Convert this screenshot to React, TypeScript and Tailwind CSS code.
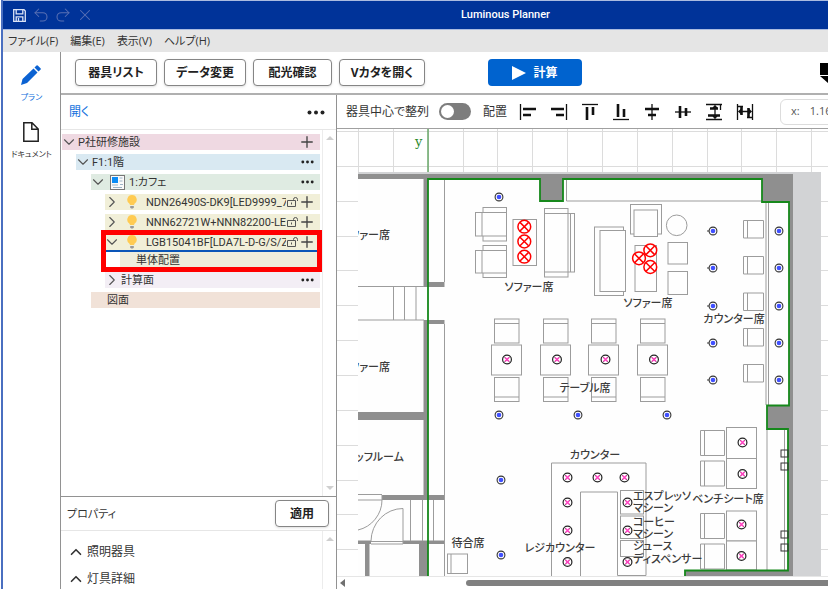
import type { ReactNode } from "react";
import clsx from "clsx";
import { ChevronDown, ChevronRight, ChevronUp, Plus, Redo2, Undo2, X } from "lucide-react";

const menus = ["ファイル(F)", "編集(E)", "表示(V)", "ヘルプ(H)"];

const toolbarButtons = [
  { label: "器具リスト", width: "w-[82px]" },
  { label: "データ変更", width: "w-[82px]" },
  { label: "配光確認", width: "w-[79px]" },
  { label: "Vカタを開く", width: "w-[86px]" },
];

export default function App() {
  return (
    <div className="h-screen overflow-hidden bg-white pb-[3px] pl-px pr-[7px] font-['Open_Sans','Noto_Sans_CJK_JP',sans-serif] text-[#333] [font-feature-settings:'palt']">
      <div className="flex h-full flex-col overflow-hidden border-l-2 border-[#4a6fc0]">
        <TitleBar />
        <MenuBar />
        <div className="flex min-h-0 flex-1">
          <SideNav />
          <div className="flex min-w-0 flex-1 flex-col border-l border-[#929292]">
            <MainToolbar />
            <div className="flex min-h-0 flex-1">
              <div className="flex w-[276px] shrink-0 flex-col border-r border-[#929292]">
                <TreePanel />
                <PropertyPanel />
              </div>
              <CanvasPanel />
            </div>
          </div>
        </div>
      </div>
    </div>
  );
}

function TitleBar() {
  return (
    <header className="relative flex h-[30px] shrink-0 items-center gap-1 border-y border-[#aabbe0] bg-[#003399] px-[10px] text-[#5870b4]">
      <button aria-label="保存" className="mr-[2px] text-[#dbe3f5]">
        <SaveIcon />
      </button>
      <button aria-label="元に戻す">
        <Undo2 size={18} strokeWidth={1.4} />
      </button>
      <button aria-label="やり直し">
        <Redo2 size={18} strokeWidth={1.4} />
      </button>
      <button aria-label="閉じる">
        <X size={18} strokeWidth={1.4} />
      </button>
      <h1 className="absolute inset-x-0 pl-[180px] text-center font-['Roboto',sans-serif] text-[11px] font-medium text-white">
        Luminous Planner
      </h1>
    </header>
  );
}

function MenuBar() {
  return (
    <nav className="flex h-[22px] shrink-0 items-center gap-3 bg-[#e5e5e5] px-[5px] text-[11px] leading-4">
      {menus.map((menu) => (
        <button key={menu}>{menu}</button>
      ))}
    </nav>
  );
}

function SideNav() {
  return (
    <nav className="flex w-[57px] shrink-0 flex-col items-center pt-[13px] text-[8px] leading-3">
      <button className="flex flex-col items-center gap-[6px] text-[#1170dc]">
        <PencilIcon />
        プラン
      </button>
      <button className="mt-[19px] flex flex-col items-center gap-[6px]">
        <DocumentIcon />
        ドキュメント
      </button>
    </nav>
  );
}

function MainToolbar() {
  return (
    <div className="flex h-[43px] shrink-0 items-center gap-[7px] overflow-hidden border-b-2 border-[#b0b0b0] pl-[14px]">
      {toolbarButtons.map(({ label, width }) => (
        <button
          key={label}
          className={clsx(
            "h-[27px] shrink-0 rounded-[4px] border border-[#858585] bg-white text-[12px] font-bold leading-4 text-[#222] shadow-sm",
            width
          )}
        >
          {label}
        </button>
      ))}
      <button className="ml-[56px] flex h-[27px] w-[94px] shrink-0 items-center justify-center gap-[7px] rounded-[4px] bg-[#0063cf] text-[12px] font-bold leading-4 text-white">
        <svg width="14" height="14" viewBox="0 0 14 14" fill="currentColor">
          <path d="M0 0 14 7 0 14Z" />
        </svg>
        計算
      </button>
      <svg className="ml-auto shrink-0" width="8" height="20" viewBox="0 0 8 20">
        <path d="M0 0h8v12H0zM0 13h8v7z" fill="#000" />
      </svg>
    </div>
  );
}

interface TreeRowProps {
  label: string;
  color: string;
  indent: string;
  toggle?: "open" | "closed";
  icon?: ReactNode;
  action?: "add" | "more";
  lock?: boolean;
}

function TreeRow({ label, color, indent, toggle, icon, action, lock }: TreeRowProps) {
  return (
    <div
      className={clsx(
        "flex h-4 items-center pr-[6px] font-['Roboto','Noto_Sans_CJK_JP',sans-serif] text-[11px] leading-4",
        color,
        indent
      )}
    >
      {toggle && (
        <button aria-label="展開" className="mr-[2px] flex w-[14px] shrink-0 justify-center text-[#555]">
          {toggle === "open" ? (
            <ChevronDown className="shrink-0" size={18} strokeWidth={1.5} />
          ) : (
            <ChevronRight className="shrink-0" size={18} strokeWidth={1.5} />
          )}
        </button>
      )}
      {icon}
      <span className="min-w-0 flex-1 overflow-hidden whitespace-nowrap pt-[2px]">{label}</span>
      {lock && <UnlockIcon />}
      {action === "add" && (
        <button aria-label="追加" className="flex w-[14px] shrink-0 justify-center text-[#444]">
          <Plus className="shrink-0" size={18} strokeWidth={1.8} />
        </button>
      )}
      {action === "more" && (
        <button aria-label="メニュー" className="shrink-0">
          <Dots small />
        </button>
      )}
    </div>
  );
}

function TreePanel() {
  return (
    <section className="flex min-h-0 flex-1 flex-col">
      <div className="flex h-[35px] shrink-0 items-center justify-between border-b border-[#e6e6e6] pl-2 pr-[11px]">
        <button className="text-[12px] leading-4 text-[#1170dc]">開く</button>
        <button aria-label="メニュー">
          <Dots />
        </button>
      </div>
      <div className="flex min-h-0 flex-1">
        <div className="flex min-w-0 flex-1 flex-col gap-1 pl-px pr-[2px] pt-1">
          <TreeRow label="P社研修施設" color="bg-[#efd9e2]" indent="" toggle="open" action="add" />
          <TreeRow label="F1:1階" color="bg-[#d9e9f2]" indent="ml-[14px]" toggle="open" action="more" />
          <TreeRow
            label="1:カフェ"
            color="bg-[#dfebe2]"
            indent="ml-[29px]"
            toggle="open"
            icon={<RoomIcon />}
            action="more"
          />
          <TreeRow
            label="NDN26490S-DK9[LED9999_70"
            color="bg-[#f1efd8]"
            indent="ml-[43px]"
            toggle="closed"
            icon={<BulbIcon />}
            lock
            action="add"
          />
          <TreeRow
            label="NNN62721W+NNN82200-LE"
            color="bg-[#f1efd8]"
            indent="ml-[43px]"
            toggle="closed"
            icon={<BulbIcon />}
            lock
            action="add"
          />
          <div className="relative">
            <TreeRow
              label="LGB15041BF[LDA7L-D-G/S/Z6"
              color="bg-[#f1efd8]"
              indent="ml-[43px]"
              toggle="open"
              icon={<BulbIcon />}
              lock
              action="add"
            />
            <div className="ml-[43px] h-[2px] bg-[#0a55b8]" />
            <TreeRow label="単体配置" color="bg-[#eeeddc]" indent="ml-[58px] pl-4" />
            <div className="pointer-events-none absolute -inset-y-1 -right-[2px] left-[39px] border-[5px] border-[#ff0000]" />
          </div>
          <TreeRow label="計算面" color="bg-[#f3eef5]" indent="ml-[43px]" toggle="closed" action="more" />
          <TreeRow label="図面" color="bg-[#f1e2d8]" indent="ml-[29px] pl-4" />
        </div>
        <div className="flex w-[14px] shrink-0 flex-col items-center justify-between border-l border-[#ececec] py-[6px]">
          <ScrollArrow />
          <ScrollArrow down />
        </div>
      </div>
    </section>
  );
}

function PropertyPanel() {
  return (
    <section className="h-[93px] shrink-0 border-t border-[#929292]">
      <div className="flex h-[34px] items-center justify-between border-b border-[#e6e6e6] pl-[6px] pr-[7px]">
        <h2 className="text-[11px] leading-4">プロパティ</h2>
        <button className="h-[27px] w-[54px] rounded-[4px] border border-[#858585] text-[12px] font-bold leading-4 text-[#222] shadow-sm">
          適用
        </button>
      </div>
      <div className="flex h-[58px]">
        <div className="flex flex-1 flex-col gap-[9px] pl-[6px] pt-3 text-[12px] leading-4">
          {["照明器具", "灯具詳細"].map((name) => (
            <button key={name} className="flex items-center gap-[2px]">
              <ChevronUp size={18} strokeWidth={2.2} />
              {name}
            </button>
          ))}
        </div>
        <div className="flex w-[14px] flex-col items-center border-l border-[#ececec] pt-[6px]">
          <ScrollArrow />
        </div>
      </div>
    </section>
  );
}

// Icons of the alignment tools, all on a 18x18 grid
const alignTools = [
  { name: "左揃え", thin: "M1.5 1v16", bold: "M4 6h13M4 12h8" },
  { name: "右揃え", thin: "M16.5 1v16", bold: "M1 6h13M6 12h8" },
  { name: "上揃え", thin: "M1 1.5h16", bold: "M6 4v13M12 4v8" },
  { name: "下揃え", thin: "M1 16.5h16", bold: "M6 1v13M12 6v8" },
  { name: "左右中央揃え", thin: "M9 1v16", bold: "M2 6h14M5 12h8" },
  { name: "上下中央揃え", thin: "M1 9h16", bold: "M6 3v12M12 5v8" },
  {
    name: "上下等間隔",
    thin: "M1 1.5h16M1 16.500h16M10 3v12M8 5l2-2 2 2M8 13l2 2 2-2M15.500 2v5",
    bold: "M5 5.500h8M3 12.500h12",
  },
  {
    name: "左右等間隔",
    thin: "M1.5 1v16M16.500 1v16M3 8.500h12M5 6.500 3 8.500l2 2M13 6.500l2 2-2 2M2 3.500h5M11 14.500h5",
    bold: "M5.500 4v8M12.500 5v10",
  },
];

function CanvasPanel() {
  return (
    <main className="flex min-w-0 flex-1 flex-col overflow-hidden">
      <div className="flex h-[34px] shrink-0 items-center border-b border-[#a0a0a0] pl-[9px]">
        <label className="flex shrink-0 items-center gap-[10px] whitespace-nowrap text-[12px] leading-4">
          器具中心で整列
          <input
            type="checkbox"
            className="h-[17px] w-8 appearance-none rounded-full bg-[#7d7d7d] p-[2px] before:block before:size-[13px] before:rounded-full before:bg-white"
          />
        </label>
        <span className="ml-3 shrink-0 text-[12px] leading-4">配置</span>
        <div className="ml-3 flex shrink-0 gap-[13px]">
          {alignTools.map((tool) => (
            <button key={tool.name} aria-label={tool.name}>
              <svg width="18" height="18" viewBox="0 0 18 18" fill="none" stroke="#111">
                <path d={tool.thin} strokeWidth="1.3" />
                <path d={tool.bold} strokeWidth="2.6" />
              </svg>
            </button>
          ))}
        </div>
        <label className="ml-[26px] flex h-[26px] w-[120px] shrink-0 items-center gap-[10px] rounded-[6px] border border-[#dcdcdc] pl-[10px] text-[11px] text-[#555]">
          x:
          <input className="w-16 outline-none" defaultValue="1.161" />
        </label>
      </div>
      <div className="min-h-0 flex-1 overflow-hidden">
        <FloorPlan />
      </div>
      <div className="flex h-[13px] shrink-0 items-center border-t border-[#e6e6e6] pl-[3px]">
        <svg width="5" height="8" viewBox="0 0 5 8">
          <path d="M5 0v8L0 4Z" fill="#707070" />
        </svg>
        <div className="ml-[121px] h-[6px] flex-1 rounded-l-full bg-[#808080]" />
      </div>
    </main>
  );
}

const blueLamps = [
  [499, 197], [499, 415], [578, 415], [667, 415], [501, 480], [501, 555],
  [713, 231], [713, 268], [713, 306], [713, 343], [713, 380],
  [779, 231], [779, 268], [779, 306], [779, 343], [779, 380],
];

const pinkLamps = [
  [507, 359.5], [557, 359.5], [605.5, 359.5], [654, 359.5],
  [567.5, 477.5], [597.5, 477.5], [624.5, 477.5],
  [567.5, 502.5], [567.5, 530.5], [567.5, 562],
  [627.5, 502.5], [627.5, 530.5], [627.5, 562],
  [742.5, 442.5], [742.5, 474], [741.5, 524.5], [741.5, 556],
];

const selectedLamps = [
  [524.3, 226.7], [524.3, 241.5], [524.3, 256.7],
  [650.3, 250.3], [639, 258.3], [650.3, 267],
];

// x, y, width, height
const furniture = [
  [483, 207.5, 23.5, 33.5], [475.5, 212.5, 31, 23.5],
  [483, 245.5, 23.5, 32], [475.5, 250.5, 31, 22.5],
  [513, 219.5, 23.5, 46],
  [544.5, 213.5, 30, 58.5], [544.5, 208.5, 23.5, 68.5],
  [594.5, 227, 29, 68.5], [600, 230.5, 25.5, 61],
  [630.5, 204.5, 31, 29.5], [634, 210, 23.5, 26.5],
  [635, 245.5, 21.5, 46], [668, 242.5, 19.5, 21.5], [668, 271.5, 19.5, 23],
  [447.5, 554, 20, 19.5],
  [726.5, 427.5, 30, 31], [726.5, 458.5, 30, 30], [726.5, 511, 30, 30], [726.5, 541, 30, 29],
  [620.5, 490.5, 23, 23.5], [620.5, 516, 23, 22.5], [620.5, 540.5, 23, 16],
];

const counterSeats = [220.5, 256.5, 293, 328.5, 364.5];
const benchSeats = [430.5, 461, 513.5, 544];
const tables = [491.5, 540.5, 588.5, 637.5];
const outlets = [450, 463, 531, 544];

const labels = [
  { x: 529, y: 291, text: "ソファー席" },
  { x: 648, y: 307, text: "ソファー席" },
  { x: 734, y: 323, text: "カウンター席" },
  { x: 585, y: 392, text: "テーブル席" },
  { x: 595, y: 459, text: "カウンター" },
  { x: 560, y: 552, text: "レジカウンター" },
  { x: 468, y: 547, text: "待合席" },
  { x: 728, y: 503, text: "ベンチシート席" },
];

// labels that run out of the left edge of the drawing
const edgeLabels = [
  { x: 390, y: 239, text: "ファー席" },
  { x: 390, y: 371, text: "ファー席" },
  { x: 404, y: 461, text: "ッフルーム" },
];

const machineLabels = [
  { y: 500, text: "エスプレッソ" },
  { y: 512, text: "マシーン" },
  { y: 526, text: "コーヒー" },
  { y: 538, text: "マシーン" },
  { y: 550, text: "ジュース" },
  { y: 563, text: "ディスペンサー" },
];

function FloorPlan() {
  return (
    <svg width="491" height="447" viewBox="337 129 491 447">
      <clipPath id="plan-area">
        <rect x="358" y="172" width="463" height="404" />
      </clipPath>
      <g stroke="#dcdcdc">
        {Array.from({ length: 14 }, (_, i) => (
          <path key={i} d={`M${358.5 + Math.round(i * 34.85)} 129V576`} />
        ))}
        {Array.from({ length: 13 }, (_, i) => (
          <path key={i} d={`M337 ${131.5 + Math.round(i * 34.85)}H828`} />
        ))}
      </g>
      <path d="M428 129V172" stroke="#5fa35f" strokeWidth="1.4" />
      <text x="415" y="146" fill="#2d8a2d" className="font-['DejaVu_Serif',serif] text-[13px]">
        y
      </text>

      <rect x="358" y="172" width="463" height="404" fill="#fefefe" />
      <path d="M358 172H821V576H792V175H358Z" fill="#d2d3d5" />

      {/* walls */}
      <g fill="#8f8f8f">
        <path d="M358 174H793V576H685V570H788V429H767V405H789V202H762V179H563V201H540V179H358Z" />
        <path d="M423.5 178H428V287H423.5ZM428 282H444.500V287H428ZM423.5 320H444.500V324H428V495H444.500V500H382V495H423.5V420H358V412H423.5Z" />
        <path d="M358 540.500H371V544H369.500V576H365V544H358ZM403 540.500H444.500V544H428V576H419V544H403Z" />
      </g>

      <g fill="none" stroke="#9c9c9c">
        <path d="M444.500 179V282M444.500 324V576M358 286.500H424M358 320H424M393.500 287V320M404.500 287V320M416 287V320" />
        <path d="M358 494.500H382M358 500H382V495M410.500 500V541M422.500 500V541M433.500 500V541M371 541.500H403M371 544H403" />
        <path d="M382 500A31 31 0 0 1 358 530M371 541A32 33 0 0 1 403 508.500V544" />
        <path d="M566.500 179V201H762M766 202V405M768.500 202V405M767 429V570M784.500 429V570" />
        <path d="M551.500 576V463H646V575.500H617.500V492H580.500V576" />
      </g>

      <g fill="#fefefe" stroke="#9c9c9c">
        {furniture.map(([x, y, w, h]) => (
          <rect key={`${x}-${y}`} x={x} y={y} width={w} height={h} />
        ))}
        <circle cx="676.7" cy="225.3" r="10.3" />
        <path d="M482 212V236M482 250V273M483 212.500H506M483 250.500H506M544 213.500H568M544 272H568M570.500 213V272M451 554V573" />
        {tables.map((x) => (
          <g key={x}>
            <rect x={x} y="345" width="30" height="30" />
            <rect x={x + 3} y="319" width="24.500" height="24" />
            <rect x={x + 3} y="377.500" width="24.500" height="24" />
            <path d={`M${x + 3} 323.500h24.500M${x + 3} 397h24.500`} />
          </g>
        ))}
        {counterSeats.map((y) => (
          <path key={y} d={`M743.500 ${y}h20v17.500h-20zM747.500 ${y}v17.500`} />
        ))}
        {benchSeats.map((y) => (
          <path key={y} d={`M700.500 ${y}h24v25h-24zM704.500 ${y}v25`} />
        ))}
      </g>

      {/* room outline */}
      <path
        d="M428 576V179H540V201H563V179H762V202H789V405.500H767V429H788V570.500H685V576"
        fill="none"
        stroke="#16881b"
        strokeWidth="1.8"
      />
      {outlets.map((y) => (
        <rect key={y} x="781" y={y} width="7" height="7" fill="none" stroke="#333" />
      ))}

      <g fill="#3c3c3c" className="text-[11px] font-medium" textAnchor="middle">
        {labels.map((label) => (
          <text key={`${label.x}-${label.y}`} x={label.x} y={label.y}>
            {label.text}
          </text>
        ))}
      </g>
      <g fill="#3c3c3c" className="text-[11px] font-medium" textAnchor="end" clipPath="url(#plan-area)">
        {edgeLabels.map((label) => (
          <text key={`${label.x}-${label.y}`} x={label.x} y={label.y}>
            {label.text}
          </text>
        ))}
      </g>
      <g fill="#3c3c3c" className="text-[11px] font-medium">
        {machineLabels.map((label) => (
          <text key={label.y} x="633" y={label.y}>
            {label.text}
          </text>
        ))}
      </g>

      {blueLamps.map(([x, y]) => (
        <g key={`${x}-${y}`}>
          {x === 713 && <circle cx={x - 5} cy={y} r="0.8" fill="#222" />}
          <circle cx={x} cy={y} r="3.9" fill="#fff" stroke="#333" strokeWidth="1.1" />
          <circle cx={x} cy={y} r="2.3" fill="#4050ff" />
        </g>
      ))}
      {pinkLamps.map(([x, y]) => (
        <g key={`${x}-${y}`}>
          <circle cx={x} cy={y} r="4.4" fill="#fff" stroke="#222" strokeWidth="1.2" />
          <path d={`M${x - 3} ${y - 3}l6 6m0-6l-6 6`} stroke="#444" strokeWidth="0.8" />
          <path d={`M${x - 2} ${y - 2}l4 4m0-4l-4 4`} stroke="#ff3fc0" strokeWidth="1.5" />
        </g>
      ))}
      {selectedLamps.map(([x, y]) => (
        <g key={`${x}-${y}`} stroke="#ff0000" strokeWidth="1.5">
          <circle cx={x} cy={y} r="6.400" fill="#fff" />
          <path d={`M${x - 4.3} ${y - 4.3}l8.600 8.600m0-8.600l-8.600 8.600`} />
        </g>
      ))}
    </svg>
  );
}

function Dots({ small }: { small?: boolean }) {
  return (
    <svg width={small ? 13 : 18} height={small ? 4 : 5} viewBox="0 0 18 5" fill="#222">
      <circle cx="2.5" cy="2.5" r="2" />
      <circle cx="9" cy="2.5" r="2" />
      <circle cx="15.5" cy="2.5" r="2" />
    </svg>
  );
}

function ScrollArrow({ down }: { down?: boolean }) {
  return (
    <svg width="8" height="4" viewBox="0 0 8 4" fill="#cfcfcf">
      <path d={down ? "M0 0h8L4 4Z" : "M0 4h8L4 0Z"} />
    </svg>
  );
}

function SaveIcon() {
  return (
    <svg width="13" height="13" viewBox="0 0 13 13" fill="none" stroke="currentColor" strokeWidth="1.3">
      <path d="M.7.7H11l1.300 1.300V12.300H.7ZM3.200.7V4.800H9.800V.7M3.200 12.300V7.800H9.800V12.300M5.500 9v3" />
    </svg>
  );
}

function PencilIcon() {
  return (
    <svg width="20" height="20" viewBox="0 0 20 20" fill="#0b62d2">
      <path d="M0 20 1.500 14 12.500 3.500 16.500 7.500 6 18ZM13.500 2.500 15.500.6Q16.300 0 17 .7L19.500 3.200Q20.200 4 19.400 4.700L17.500 6.500Z" />
    </svg>
  );
}

function DocumentIcon() {
  return (
    <svg width="16" height="20" viewBox="0 0 16 20" fill="none" stroke="#222" strokeWidth="1.5">
      <path d="M.8.8H9L15.200 7V19.200H.8ZM8.800.8V7.200H15.200" />
    </svg>
  );
}

function RoomIcon() {
  return (
    <svg className="ml-[3px] mr-1 shrink-0" width="15" height="15" viewBox="0 0 15 15">
      <rect x=".5" y=".5" width="14" height="14" fill="#fafafa" stroke="#777" />
      <rect x="2" y="2" width="6" height="6" fill="#0b8cf5" />
      <path d="M9.500 3h3M9.500 6h3M2 10h6M10 9.500h3M3 12.500h9" stroke="#9db4c6" />
    </svg>
  );
}

function BulbIcon() {
  return (
    <svg className="ml-[6px] mr-[9px] shrink-0" width="10" height="14" viewBox="0 0 10 14">
      <path d="M5 0A4.700 4.700 0 0 1 7.500 8.700L7 10H3L2.500 8.700A4.700 4.700 0 0 1 5 0Z" fill="#ffcb52" />
      <path d="M3.200 11h3.600v1.200L6 13.500H4L3.200 12.200Z" fill="#999" />
    </svg>
  );
}

function UnlockIcon() {
  return (
    <svg className="mx-px shrink-0" width="12" height="11" viewBox="0 0 12 11" fill="none" stroke="#555">
      <path d="M.5 3.500h8v6h-8ZM6.500 3.500V2.500a2 2 0 0 1 4 0V4M4.500 5.500v2" />
    </svg>
  );
}
